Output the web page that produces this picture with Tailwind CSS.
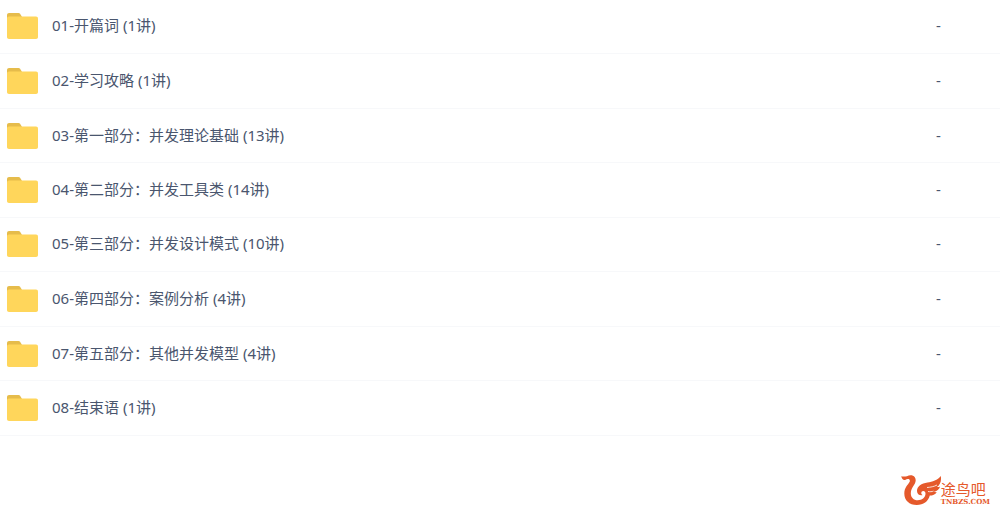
<!DOCTYPE html>
<html lang="zh-CN">
<head>
    <meta charset="UTF-8">
    <meta name="viewport" content="width=device-width, initial-scale=1.0">
    <title>课程目录</title>
    <script src="https://cdn.jsdelivr.net/npm/@tailwindcss/browser@4"></script>
</head>
<body class="min-h-screen flex flex-col bg-white font-['Noto_Sans','Noto_Sans_CJK_SC',sans-serif] text-[#4a566e]">
    <!-- Folder icon, shared by all rows -->
    <svg class="hidden">
        <symbol id="folder" viewBox="0 0 32 28">
            <path fill="#e6bc4b" d="M3 2h9.500c.7 0 1.200.3 1.600.8L16 6V10H1V4c0-1.200.9-2 2-2z"/>
            <path fill="#ffd65b" d="M1 7.500C1 6.300 1.800 5.500 3 5.500h27c1.200 0 2 .8 2 2V26c0 1.200-.8 2-2 2H3c-1.200 0-2-.8-2-2z"/>
        </symbol>
    </svg>

    <main>
        <table class="w-full text-[15px] leading-5">
            <tbody id="fileList">
                <tr class="h-[53px] border-b border-[#f7f8fa]">
                    <td class="pl-1.5 pb-0.5"><a href="#" class="flex items-center gap-3.5"><svg class="w-8 h-7 shrink-0"><use href="#folder"/></svg>01-开篇词 (1讲)</a></td>
                    <td class="w-16 pb-0.5 text-left">-</td>
                </tr>
                <tr class="h-[55px] border-b border-[#f7f8fa]">
                    <td class="pl-1.5 pb-0.5"><a href="#" class="flex items-center gap-3.5"><svg class="w-8 h-7 shrink-0"><use href="#folder"/></svg>02-学习攻略 (1讲)</a></td>
                    <td class="w-16 pb-0.5 text-left">-</td>
                </tr>
                <tr class="h-[54px] border-b border-[#f7f8fa]">
                    <td class="pl-1.5"><a href="#" class="flex items-center gap-3.5"><svg class="w-8 h-7 shrink-0"><use href="#folder"/></svg>03-第一部分：并发理论基础 (13讲)</a></td>
                    <td class="w-16 text-left">-</td>
                </tr>
                <tr class="h-[55px] border-b border-[#f7f8fa]">
                    <td class="pl-1.5 pb-0.5"><a href="#" class="flex items-center gap-3.5"><svg class="w-8 h-7 shrink-0"><use href="#folder"/></svg>04-第二部分：并发工具类 (14讲)</a></td>
                    <td class="w-16 pb-0.5 text-left">-</td>
                </tr>
                <tr class="h-[54px] border-b border-[#f7f8fa]">
                    <td class="pl-1.5 pb-0.5"><a href="#" class="flex items-center gap-3.5"><svg class="w-8 h-7 shrink-0"><use href="#folder"/></svg>05-第三部分：并发设计模式 (10讲)</a></td>
                    <td class="w-16 pb-0.5 text-left">-</td>
                </tr>
                <tr class="h-[55px] border-b border-[#f7f8fa]">
                    <td class="pl-1.5 pb-0.5"><a href="#" class="flex items-center gap-3.5"><svg class="w-8 h-7 shrink-0"><use href="#folder"/></svg>06-第四部分：案例分析 (4讲)</a></td>
                    <td class="w-16 pb-0.5 text-left">-</td>
                </tr>
                <tr class="h-[54px] border-b border-[#f7f8fa]">
                    <td class="pl-1.5"><a href="#" class="flex items-center gap-3.5"><svg class="w-8 h-7 shrink-0"><use href="#folder"/></svg>07-第五部分：其他并发模型 (4讲)</a></td>
                    <td class="w-16 text-left">-</td>
                </tr>
                <tr class="h-[55px] border-b border-[#f7f8fa]">
                    <td class="pl-1.5 pb-0.5"><a href="#" class="flex items-center gap-3.5"><svg class="w-8 h-7 shrink-0"><use href="#folder"/></svg>08-结束语 (1讲)</a></td>
                    <td class="w-16 pb-0.5 text-left">-</td>
                </tr>
            </tbody>
        </table>
    </main>

    <!-- Site logo -->
    <footer class="mt-auto flex justify-end pr-2.5 pb-1 text-[#e5592b]">
        <a href="#" class="flex items-end">
            <svg class="w-10 h-8" viewBox="0 0 40 32" fill="currentColor">
                <path d="M0 2.500C2 2.300 4 2.600 6 2.200 8.500.8 12 .8 13.800 3.300c1.700 2.500.7 5.200-.8 7.700-1.800 2.900-3.200 5-3.200 8.200 0 4.300 2.800 7 6.900 7 4.400 0 7.500-2.700 7.800-6.200.1-1.700-.8-2.900-2.200-2.900-1.200 0-2 .8-2 1.900 0 1 .5 1.700 1.400 2.100-3 .8-5.700-1-5.700-4.200 0-4.700 4.500-7.500 10.500-8.400C31.500 7.700 36.500 6.400 39.800 2c.8 5-.7 8.800-3.900 11 1.200.2 2.200 0 3.200-.5-.8 3-3.300 4.900-6.300 5.300 1 .4 2 .5 3 .4-1.500 2.500-4.200 3.300-7 3.300C27.100 27.500 22.500 31 15.800 31 8.300 31 3.300 26.300 3.300 19.500 3.300 13.500 7 10.800 8.500 8c1-2-.2-3.300-2-3-1.500.3-2 1.300-3.500 1C1.400 5.600 1 4 0 2.500z"/>
                <path fill="none" stroke="#fff" stroke-width="0.800" d="M26 13.500c3.500-.3 7-.8 10-2.500M27 17.500c2 .4 4 .2 5.500-.4"/>
            </svg>
            <span class="flex flex-col gap-px">
                <span class="text-[15px] leading-4 font-['Noto_Sans_CJK_SC',sans-serif]">途鸟吧</span>
                <span class="text-[7px] leading-2 font-bold font-['DejaVu_Serif',serif]">TNBZS.COM</span>
            </span>
        </a>
    </footer>
</body>
</html>
